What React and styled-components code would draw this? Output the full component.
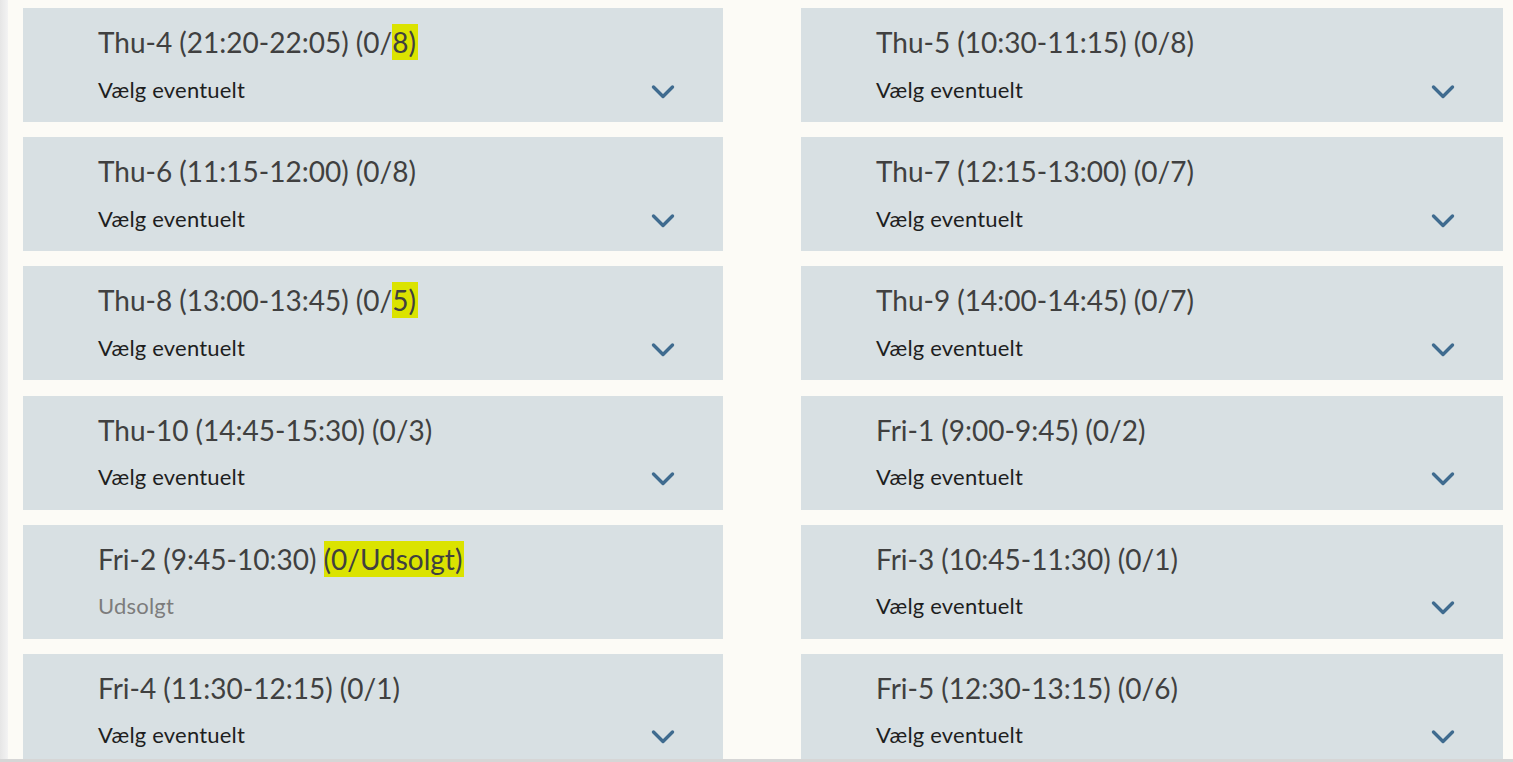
import React from 'react';
import styled, { createGlobalStyle } from 'styled-components';

const slots = [
  { title: 'Thu-4 (21:20-22:05) (0/', tail: '8)', mark: true },
  { title: 'Thu-5 (10:30-11:15) (0/8)' },
  { title: 'Thu-6 (11:15-12:00) (0/8)' },
  { title: 'Thu-7 (12:15-13:00) (0/7)' },
  { title: 'Thu-8 (13:00-13:45) (0/', tail: '5)', mark: true },
  { title: 'Thu-9 (14:00-14:45) (0/7)' },
  { title: 'Thu-10 (14:45-15:30) (0/3)' },
  { title: 'Fri-1 (9:00-9:45) (0/2)' },
  { title: 'Fri-2 (9:45-10:30) ', tail: '(0/Udsolgt)', mark: true, soldOut: true },
  { title: 'Fri-3 (10:45-11:30) (0/1)' },
  { title: 'Fri-4 (11:30-12:15) (0/1)' },
  { title: 'Fri-5 (12:30-13:15) (0/6)' },
];

function Chevron() {
  return (
    <ChevronSvg width="26" height="16" viewBox="0 0 26 16">
      <polyline points="3.5,3 13,12.5 22.5,3" fill="none" stroke="#3f6b8f" strokeWidth="3.4" strokeLinecap="round" strokeLinejoin="round" />
    </ChevronSvg>
  );
}

function SlotCard({ slot }) {
  return (
    <Card>
      <Title>
        {slot.title}
        {slot.tail && <Mark>{slot.tail}</Mark>}
      </Title>
      <Bottom>
        {slot.soldOut ? (
          <Choice muted>Udsolgt</Choice>
        ) : (
          <>
            <Choice>Vælg eventuelt</Choice>
            <Chevron />
          </>
        )}
      </Bottom>
    </Card>
  );
}

export default function App() {
  return (
    <>
      <GlobalStyle />
      <Shell>
        <Edge />
        <Content>
          <Grid>
            {slots.map((s) => (
              <SlotCard key={s.title} slot={s} />
            ))}
          </Grid>
        </Content>
      </Shell>
    </>
  );
}

const GlobalStyle = createGlobalStyle`
  html, body {
    margin: 0;
    padding: 0;
    background: #fcfbf6;
  }
  body {
    font-family: "Lato", "Open Sans", sans-serif;
  }
`;

const Shell = styled.div`
  display: flex;
  height: 762px;
  box-sizing: border-box;
  border-bottom: 3px solid #d6d6d6;
  overflow: hidden;
  background: #fcfbf6;
`;

const Edge = styled.div`
  width: 8px;
  flex: none;
  background: linear-gradient(to right, #e6e6e6, #f3f3f3);
`;

const Content = styled.div`
  flex: 1;
  padding: 8px 10px 0 15px;
`;

const Grid = styled.div`
  display: grid;
  grid-template-columns: 700px 702px;
  column-gap: 78px;
  row-gap: 15.2px;
`;

const Card = styled.div`
  height: 114px;
  box-sizing: border-box;
  background: #d8e0e3;
  padding: 16px 47px 0 75px;
  display: flex;
  flex-direction: column;
`;

const Title = styled.div`
  font-size: 28px;
  line-height: 36px;
  color: #404040;
  white-space: nowrap;
`;

const Mark = styled.span`
  background: #dbe300;
  padding: 1px 2px 1px 0;
`;

const Bottom = styled.div`
  display: flex;
  align-items: center;
  justify-content: space-between;
  margin-top: 16px;
  height: 26px;
`;

const Choice = styled.span`
  font-size: 22px;
  letter-spacing: 0.2px;
  color: ${(p) => (p.muted ? '#7c7c7c' : '#1e1e1e')};
`;

const ChevronSvg = styled.svg`
  margin-top: 5px;
  flex: none;
`;
